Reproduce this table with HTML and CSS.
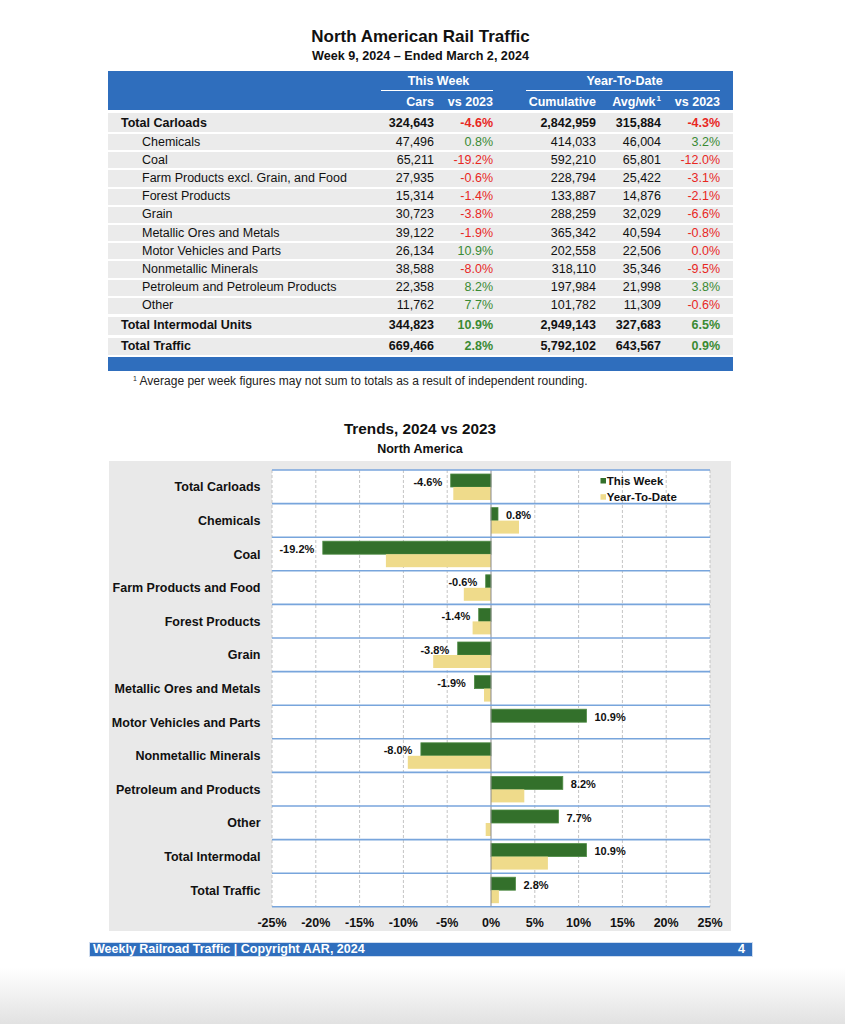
FILE: index.html
```html
<!DOCTYPE html>
<html lang="en">
<head>
<meta charset="utf-8">
<title>North American Rail Traffic</title>
<link rel="stylesheet" href="styles.css">
</head>
<body>
<div class="page">
  <header class="report-head">
    <h1 class="report-title">North American Rail Traffic</h1>
    <p class="report-sub">Week 9, 2024 – Ended March 2, 2024</p>
  </header>

  <table class="traffic">
    <colgroup>
      <col class="c-label"><col class="c-cars"><col class="c-pct"><col class="c-cum"><col class="c-avg"><col class="c-pct"><col class="c-pad">
    </colgroup>
    <thead>
      <tr class="hrow1">
        <th></th>
        <th colspan="2"><div class="grp grp-week">This Week</div></th>
        <th colspan="3"><div class="grp grp-ytd">Year-To-Date</div></th>
        <th></th>
      </tr>
      <tr class="hrow2">
        <th></th><th>Cars</th><th>vs 2023</th><th>Cumulative</th><th>Avg/wk<sup>1</sup></th><th>vs 2023</th><th></th>
      </tr>
    </thead>
    <tbody>
      <tr class="r-total"><td class="lbl">Total Carloads</td><td>324,643</td><td class="neg">-4.6%</td><td>2,842,959</td><td>315,884</td><td class="neg">-4.3%</td><td></td></tr>
      <tr class="r-sub"><td class="lbl">Chemicals</td><td>47,496</td><td class="pos">0.8%</td><td>414,033</td><td>46,004</td><td class="pos">3.2%</td><td></td></tr>
      <tr class="r-sub"><td class="lbl">Coal</td><td>65,211</td><td class="neg">-19.2%</td><td>592,210</td><td>65,801</td><td class="neg">-12.0%</td><td></td></tr>
      <tr class="r-sub"><td class="lbl">Farm Products excl. Grain, and Food</td><td>27,935</td><td class="neg">-0.6%</td><td>228,794</td><td>25,422</td><td class="neg">-3.1%</td><td></td></tr>
      <tr class="r-sub"><td class="lbl">Forest Products</td><td>15,314</td><td class="neg">-1.4%</td><td>133,887</td><td>14,876</td><td class="neg">-2.1%</td><td></td></tr>
      <tr class="r-sub"><td class="lbl">Grain</td><td>30,723</td><td class="neg">-3.8%</td><td>288,259</td><td>32,029</td><td class="neg">-6.6%</td><td></td></tr>
      <tr class="r-sub"><td class="lbl">Metallic Ores and Metals</td><td>39,122</td><td class="neg">-1.9%</td><td>365,342</td><td>40,594</td><td class="neg">-0.8%</td><td></td></tr>
      <tr class="r-sub"><td class="lbl">Motor Vehicles and Parts</td><td>26,134</td><td class="pos">10.9%</td><td>202,558</td><td>22,506</td><td class="neg">0.0%</td><td></td></tr>
      <tr class="r-sub"><td class="lbl">Nonmetallic Minerals</td><td>38,588</td><td class="neg">-8.0%</td><td>318,110</td><td>35,346</td><td class="neg">-9.5%</td><td></td></tr>
      <tr class="r-sub"><td class="lbl">Petroleum and Petroleum Products</td><td>22,358</td><td class="pos">8.2%</td><td>197,984</td><td>21,998</td><td class="pos">3.8%</td><td></td></tr>
      <tr class="r-sub"><td class="lbl">Other</td><td>11,762</td><td class="pos">7.7%</td><td>101,782</td><td>11,309</td><td class="neg">-0.6%</td><td></td></tr>
      <tr class="r-major"><td class="lbl">Total Intermodal Units</td><td>344,823</td><td class="pos">10.9%</td><td>2,949,143</td><td>327,683</td><td class="pos">6.5%</td><td></td></tr>
      <tr class="r-grand"><td class="lbl">Total Traffic</td><td>669,466</td><td class="pos">2.8%</td><td>5,792,102</td><td>643,567</td><td class="pos">0.9%</td><td></td></tr>
    </tbody>
    <tfoot>
      <tr><td colspan="7"></td></tr>
    </tfoot>
  </table>

  <p class="footnote"><sup>1</sup> Average per week figures may not sum to totals as a result of independent rounding.</p>

  <section class="trends">
    <h2 class="trends-title">Trends, 2024 vs 2023</h2>
    <p class="trends-region">North America</p>
    <div class="chart-panel">
      <svg class="chart" width="622" height="470" viewBox="0 0 622 470" xmlns="http://www.w3.org/2000/svg">
        <rect class="plot-bg" x="163" y="9" width="438" height="436.8"/>
        <g class="grid">
          <line x1="163" y1="9" x2="163" y2="445.8"/>
          <line x1="206.8" y1="9" x2="206.8" y2="445.8"/>
          <line x1="250.6" y1="9" x2="250.6" y2="445.8"/>
          <line x1="294.4" y1="9" x2="294.4" y2="445.8"/>
          <line x1="338.2" y1="9" x2="338.2" y2="445.8"/>
          <line x1="425.8" y1="9" x2="425.8" y2="445.8"/>
          <line x1="469.6" y1="9" x2="469.6" y2="445.8"/>
          <line x1="513.4" y1="9" x2="513.4" y2="445.8"/>
          <line x1="557.2" y1="9" x2="557.2" y2="445.8"/>
          <line x1="601" y1="9" x2="601" y2="445.8"/>
        </g>
        <g class="bars-week">
          <rect x="341.7" y="13" width="40.3" height="13"/>
          <rect x="382" y="46.6" width="7" height="13"/>
          <rect x="213.8" y="80.2" width="168.2" height="13"/>
          <rect x="376.7" y="113.8" width="5.3" height="13"/>
          <rect x="369.7" y="147.4" width="12.3" height="13"/>
          <rect x="348.7" y="181" width="33.3" height="13"/>
          <rect x="365.4" y="214.6" width="16.6" height="13"/>
          <rect x="382" y="248.2" width="95.5" height="13"/>
          <rect x="311.9" y="281.8" width="70.1" height="13"/>
          <rect x="382" y="315.4" width="71.8" height="13"/>
          <rect x="382" y="349" width="67.5" height="13"/>
          <rect x="382" y="382.6" width="95.5" height="13"/>
          <rect x="382" y="416.2" width="24.5" height="13"/>
        </g>
        <g class="bars-ytd">
          <rect x="344.3" y="26" width="37.7" height="13"/>
          <rect x="382" y="59.6" width="28" height="13"/>
          <rect x="276.9" y="93.2" width="105.1" height="13"/>
          <rect x="354.8" y="126.8" width="27.2" height="13"/>
          <rect x="363.6" y="160.4" width="18.4" height="13"/>
          <rect x="324.2" y="194" width="57.8" height="13"/>
          <rect x="375" y="227.6" width="7" height="13"/>
          <rect x="298.8" y="294.8" width="83.2" height="13"/>
          <rect x="382" y="328.4" width="33.3" height="13"/>
          <rect x="376.7" y="362" width="5.3" height="13"/>
          <rect x="382" y="395.6" width="56.9" height="13"/>
          <rect x="382" y="429.2" width="7.9" height="13"/>
        </g>
        <line class="zero" x1="382" y1="9" x2="382" y2="445.8"/>
        <g class="hlines">
          <line x1="163" y1="9" x2="601" y2="9"/>
          <line x1="163" y1="42.6" x2="601" y2="42.6"/>
          <line x1="163" y1="76.2" x2="601" y2="76.2"/>
          <line x1="163" y1="109.8" x2="601" y2="109.8"/>
          <line x1="163" y1="143.4" x2="601" y2="143.4"/>
          <line x1="163" y1="177" x2="601" y2="177"/>
          <line x1="163" y1="210.6" x2="601" y2="210.6"/>
          <line x1="163" y1="244.2" x2="601" y2="244.2"/>
          <line x1="163" y1="277.8" x2="601" y2="277.8"/>
          <line x1="163" y1="311.4" x2="601" y2="311.4"/>
          <line x1="163" y1="345" x2="601" y2="345"/>
          <line x1="163" y1="378.6" x2="601" y2="378.6"/>
          <line x1="163" y1="412.2" x2="601" y2="412.2"/>
          <line x1="163" y1="445.8" x2="601" y2="445.8"/>
        </g>
        <g class="cat-labels">
          <text x="151.5" y="30.3">Total Carloads</text>
          <text x="151.5" y="63.9">Chemicals</text>
          <text x="151.5" y="97.5">Coal</text>
          <text x="151.5" y="131.1">Farm Products and Food</text>
          <text x="151.5" y="164.7">Forest Products</text>
          <text x="151.5" y="198.3">Grain</text>
          <text x="151.5" y="231.9">Metallic Ores and Metals</text>
          <text x="151.5" y="265.5">Motor Vehicles and Parts</text>
          <text x="151.5" y="299.1">Nonmetallic Minerals</text>
          <text x="151.5" y="332.7">Petroleum and Products</text>
          <text x="151.5" y="366.3">Other</text>
          <text x="151.5" y="399.9">Total Intermodal</text>
          <text x="151.5" y="433.5">Total Traffic</text>
        </g>
        <g class="val-neg">
          <text x="333.2" y="24.5">-4.6%</text>
          <text x="205.3" y="91.7">-19.2%</text>
          <text x="368.2" y="125.3">-0.6%</text>
          <text x="361.2" y="158.9">-1.4%</text>
          <text x="340.2" y="192.5">-3.8%</text>
          <text x="356.9" y="226.1">-1.9%</text>
          <text x="303.4" y="293.3">-8.0%</text>
        </g>
        <g class="val-pos">
          <text x="397" y="58.1">0.8%</text>
          <text x="485.5" y="259.7">10.9%</text>
          <text x="461.8" y="326.9">8.2%</text>
          <text x="457.5" y="360.5">7.7%</text>
          <text x="485.5" y="394.1">10.9%</text>
          <text x="414.5" y="427.7">2.8%</text>
        </g>
        <g class="axis">
          <text x="163" y="466">-25%</text>
          <text x="206.8" y="466">-20%</text>
          <text x="250.6" y="466">-15%</text>
          <text x="294.4" y="466">-10%</text>
          <text x="338.2" y="466">-5%</text>
          <text x="382" y="466">0%</text>
          <text x="425.8" y="466">5%</text>
          <text x="469.6" y="466">10%</text>
          <text x="513.4" y="466">15%</text>
          <text x="557.2" y="466">20%</text>
          <text x="601" y="466">25%</text>
        </g>
        <g class="legend">
          <rect class="key-week" x="491.5" y="17" width="5.5" height="5.5"/>
          <text x="497.7" y="23.8">This Week</text>
          <rect class="key-ytd" x="491.5" y="33.2" width="5.5" height="5.5"/>
          <text x="497.7" y="39.8">Year-To-Date</text>
        </g>
      </svg>
    </div>
  </section>

  <footer class="page-foot">
    <span>Weekly Railroad Traffic | Copyright AAR, 2024</span>
    <span>4</span>
  </footer>
</div>
</body>
</html>
```
FILE: styles.css
```css
html {
  height: 100%;
  background: linear-gradient(to bottom, #ffffff 0px, #ffffff 968px, #e2e2e2 1024px);
}
body {
  margin: 0;
  min-height: 1024px;
  font-family: "Liberation Sans", Arial, Helvetica, sans-serif;
  color: #111;
}
.page {
  width: 664px;
  margin-left: 89px;
  padding-top: 27px;
}
.report-head {
  margin-left: 19px;
  width: 625px;
  text-align: center;
}
.report-title {
  margin: 0;
  font-size: 17px;
  line-height: 20px;
  font-weight: bold;
}
.report-sub {
  margin: 1px 0 0;
  font-size: 12.6px;
  line-height: 16px;
  font-weight: bold;
}

/* table */
.traffic {
  margin: 7px 0 0 19px;
  width: 625px;
  table-layout: fixed;
  border-collapse: separate;
  border-spacing: 0;
  font-size: 12.5px;
  line-height: 15px;
}
.c-label { width: 272px; }
.c-cars { width: 54px; }
.c-pct { width: 59px; }
.c-cum { width: 103px; }
.c-avg { width: 65px; }
.c-pad { width: 13px; }

.traffic thead th {
  background: #2f6ebd;
  color: #fff;
  font-weight: bold;
  padding: 0;
  text-align: right;
  white-space: nowrap;
}
.traffic thead .hrow1 th {
  padding-top: 3px;
  text-align: center;
}
.grp {
  border-bottom: 1.5px solid #fff;
  padding-bottom: 0.5px;
}
.grp-week { margin: 0 -3px 0 1px; }
.grp-ytd { margin: 0 -3px 0 33px; }
.traffic thead .hrow2 th {
  padding-top: 4px;
  padding-bottom: 0.5px;
}
.hrow2 sup {
  font-size: 8px;
  line-height: 0;
  vertical-align: 5px;
  margin-left: 1px;
}

.traffic tbody td {
  background: #ebebeb;
  border-top: 2px solid #fff;
  padding: 0.6px 0;
  text-align: right;
  white-space: nowrap;
}
.traffic tbody td.lbl {
  text-align: left;
  padding-left: 34px;
}
.r-total td, .r-major td, .r-grand td { font-weight: bold; }
.traffic tbody .r-total td.lbl, .traffic tbody .r-major td.lbl, .traffic tbody .r-grand td.lbl { padding-left: 13px; }
.traffic tbody .r-total td { border-top-width: 3px; padding-top: 2.5px; padding-bottom: 1.5px; }
.traffic tbody .r-major td { border-top-width: 3.5px; padding-top: 1.5px; padding-bottom: 1.5px; }
.traffic tbody .r-grand td { border-top-width: 3.5px; padding-top: 1px; padding-bottom: 1px; }
.neg { color: #e8271f; }
.pos { color: #3a8a33; }
.traffic tfoot td {
  background: #2f6ebd;
  border-top: 2.5px solid #fff;
  padding: 7px 0;
}

.footnote {
  margin: 3px 0 0 44px;
  font-size: 12px;
  line-height: 14px;
  color: #222;
}
.footnote sup {
  font-size: 7px;
  line-height: 0;
  vertical-align: 4px;
}

/* chart */
.trends {
  margin-top: 32px;
}
.trends-title {
  margin: 0 0 0 20px;
  width: 622px;
  text-align: center;
  font-size: 15.3px;
  line-height: 18px;
  font-weight: bold;
}
.trends-region {
  margin: 4px 0 0 20px;
  width: 622px;
  text-align: center;
  font-size: 12.5px;
  line-height: 15px;
  font-weight: bold;
}
.chart-panel {
  margin: 4px 0 0 20px;
  width: 622px;
  height: 470px;
  background: #e9e9e9;
}
.chart {
  display: block;
  font-family: "Liberation Sans", Arial, Helvetica, sans-serif;
  font-weight: bold;
}
.plot-bg { fill: #fff; }
.grid line {
  stroke: #c4c4c4;
  stroke-width: 1;
  stroke-dasharray: 3 2;
}
.bars-week rect {
  fill: #33702b;
  stroke: #4f8c45;
  stroke-width: 0.8;
}
.bars-ytd rect { fill: #efdb8b; }
.zero { stroke: #8a8a8a; stroke-width: 1; }
.hlines line { stroke: #78a5dc; stroke-width: 1.6; }
.cat-labels text {
  font-size: 12.5px;
  text-anchor: end;
  fill: #111;
}
.val-neg text, .val-pos text {
  font-size: 11px;
  fill: #111;
}
.val-neg text { text-anchor: end; }
.val-pos text { text-anchor: start; }
.axis text {
  font-size: 12.5px;
  text-anchor: middle;
  fill: #111;
}
.legend text {
  font-size: 11.5px;
  fill: #111;
}
.key-week { fill: #33702b; }
.key-ytd { fill: #efdb8b; }

/* footer */
.page-foot {
  margin-top: 11px;
  height: 15.6px;
  background: #2f6ebd;
  border: 0.5px solid #cfdcee;
  box-sizing: border-box;
  display: flex;
  justify-content: space-between;
  align-items: center;
  padding: 0 7px 0 3px;
  color: #fff;
  font-size: 12.5px;
  font-weight: bold;
  line-height: 15px;
}
```
